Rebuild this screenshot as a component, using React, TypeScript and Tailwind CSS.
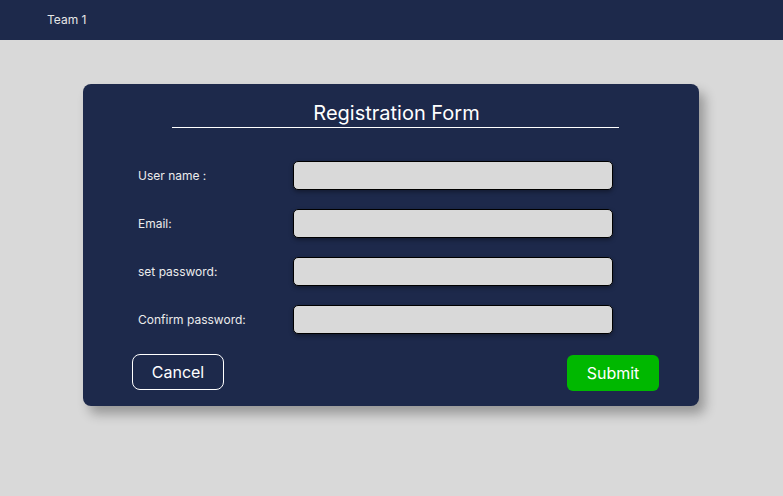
import React from 'react';

const fields = ['User name :', 'Email:', 'set password:', 'Confirm password:'];

export default function App() {
  return (
    <div className="min-h-[496px] w-full bg-[#d9d9d9] font-['Inter','Liberation_Sans',sans-serif]">
      {/* Top bar */}
      <div className="h-10 bg-[#1d294b] flex items-center pl-[47px]">
        <span className="text-[12px] text-[#e6e6e6]">Team 1</span>
      </div>

      {/* Registration card */}
      <div className="ml-[83px] mt-[44px] w-[616px] h-[322px] rounded-lg bg-[#1d294b] shadow-[6px_8px_12px_rgba(0,0,0,0.3)] flex flex-col">
        <div className="ml-[89px] mt-[15px] w-[447px] border-b border-white text-center">
          <h1 className="pl-[2px] text-[20px] leading-[28px] text-white">Registration Form</h1>
        </div>

        <div className="mt-[33px] pl-[55px] flex flex-col gap-[19px]">
          {fields.map((label) => (
            <div key={label} className="flex items-center">
              <label className="w-[155px] text-[12px] text-[#ececec]">{label}</label>
              <input
                type="text"
                className="w-[320px] h-[29px] rounded-[5px] border border-black bg-[#d9d9d9] shadow-[0_2px_4px_rgba(0,0,0,0.35)] outline-none"
              />
            </div>
          ))}
        </div>

        <div className="mt-[20px] pl-[49px] pr-[40px] flex justify-between">
          <button className="w-[92px] h-[36px] rounded-lg border border-white text-[16px] text-white">
            Cancel
          </button>
          <button className="mt-px w-[92px] h-[36px] rounded-md bg-[#00b800] text-[16px] text-white">
            Submit
          </button>
        </div>
      </div>
    </div>
  );
}
